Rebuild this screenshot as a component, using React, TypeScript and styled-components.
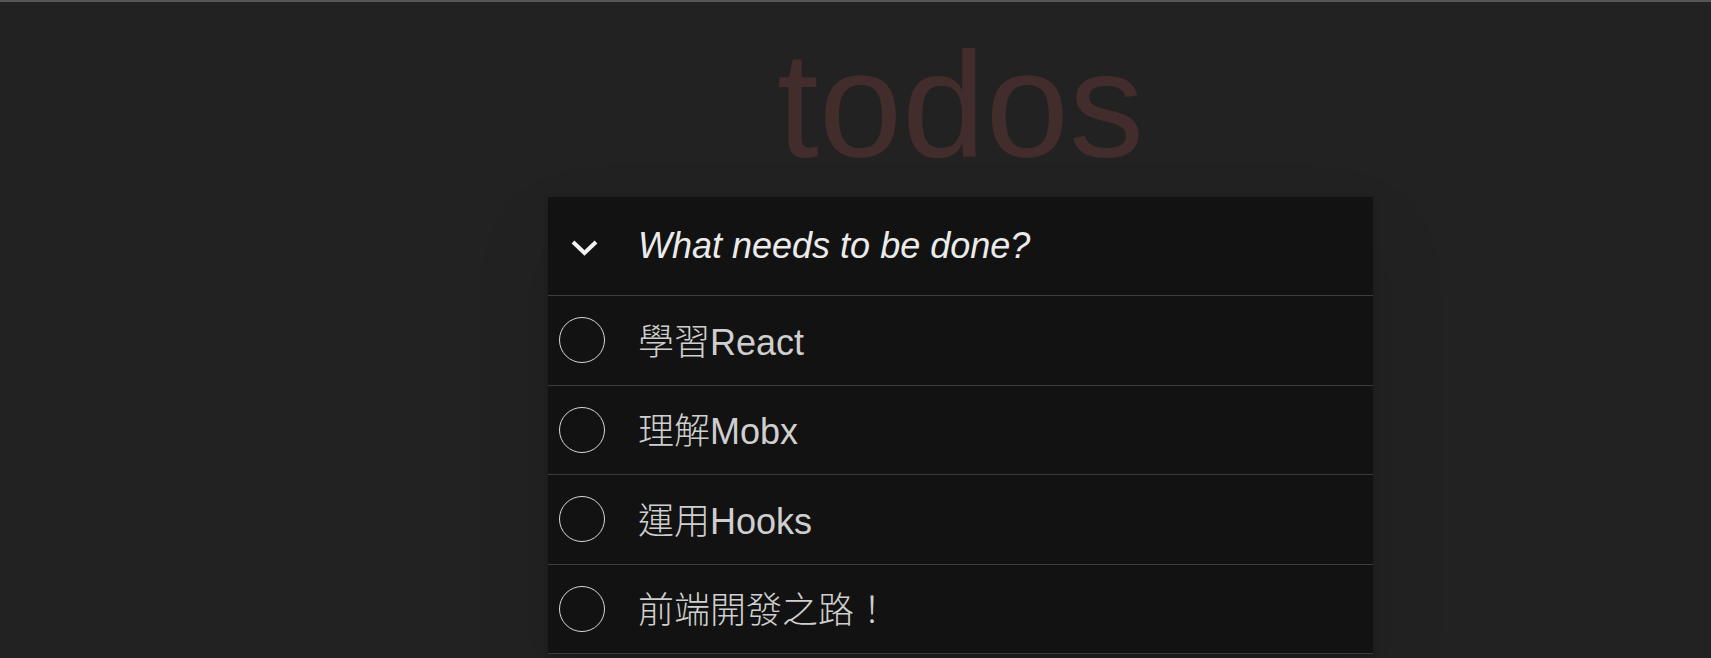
import React from 'react';
import styled, { createGlobalStyle } from 'styled-components';

const todos = ['學習React', '理解Mobx', '運用Hooks', '前端開發之路！'];

const GlobalStyle = createGlobalStyle`
  html, body {
    margin: 0;
    padding: 0;
    background: #222222;
  }
  body {
    font-family: "Liberation Sans", Arial, "Noto Sans CJK TC", sans-serif;
    overflow: hidden;
  }
`;

const Page = styled.div`
  min-height: 656px;
  border-top: 2px solid #555555;
  padding-top: 28px;
`;

const TodoApp = styled.section`
  width: 825px;
  margin-left: 548px;
`;

const Title = styled.h1`
  margin: 0 0 17px;
  text-align: center;
  font-size: 150px;
  line-height: 150px;
  font-weight: 400;
  color: #432c2c;
`;

const Card = styled.div`
  background: #121212;
  box-shadow: 0 3px 6px rgba(0, 0, 0, 0.2), 0 37px 75px rgba(0, 0, 0, 0.1);
`;

const HeaderRow = styled.div`
  display: flex;
  align-items: center;
  height: 98px;
  border-bottom: 1px solid #3c3c3c;
`;

const ToggleAll = styled.div`
  flex: none;
  width: 90px;
  display: flex;
  padding-left: 23px;
  padding-top: 4px;
  box-sizing: border-box;
`;

const NewTodo = styled.div`
  font-size: 36px;
  font-style: italic;
  color: #ebebeb;
`;

const List = styled.ul`
  list-style: none;
  margin: 0;
  padding: 0;
`;

const Item = styled.li`
  display: flex;
  align-items: center;
  height: 88.5px;
  border-bottom: 1px solid #3c3c3c;
`;

const Check = styled.span`
  flex: none;
  box-sizing: border-box;
  width: 46px;
  height: 46px;
  margin-left: 11px;
  border: 1.5px solid #d8d8d8;
  border-radius: 50%;
`;

const Label = styled.span`
  margin-left: 33px;
  margin-bottom: 3px;
  font-size: 36px;
  color: #cfcfcf;
  font-weight: 300;
`;

const Chevron: React.FC = () => (
  <svg width="27" height="16" viewBox="0 0 27 16">
    <path d="M2 2 L13.5 13 L25 2" fill="none" stroke="#f2f2f2" strokeWidth="4" />
  </svg>
);

const App: React.FC = () => (
  <React.Fragment>
    <GlobalStyle />
    <Page>
      <TodoApp>
        <Title>todos</Title>
        <Card>
          <HeaderRow>
            <ToggleAll>
              <Chevron />
            </ToggleAll>
            <NewTodo>What needs to be done?</NewTodo>
          </HeaderRow>
          <List>
            {todos.map((t) => (
              <Item key={t}>
                <Check />
                <Label>{t}</Label>
              </Item>
            ))}
          </List>
        </Card>
      </TodoApp>
    </Page>
  </React.Fragment>
);

export default App;
